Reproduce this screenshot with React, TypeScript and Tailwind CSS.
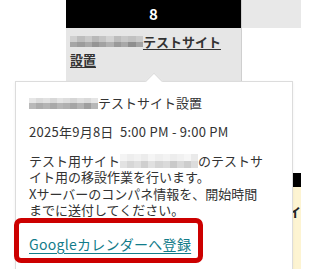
const cellMosaic = [
  'bg-[#cfcfcf]', 'bg-[#bdbdbd]', 'bg-[#c9c9c9]', 'bg-[#b8b8b8]', 'bg-[#c4c4c4]', 'bg-[#d2d2d2]', 'bg-[#bcbcbc]', 'bg-[#c8c8c8]', 'bg-[#c1c1c1]', 'bg-[#cacaca]',
  'bg-[#a6a6a6]', 'bg-[#9c9c9c]', 'bg-[#a9a9a9]', 'bg-[#959595]', 'bg-[#a2a2a2]', 'bg-[#b1b1b1]', 'bg-[#9a9a9a]', 'bg-[#a8a8a8]', 'bg-[#8f8f8f]', 'bg-[#a4a4a4]',
];

const titleMosaic = [
  'bg-[#e6e6e6]', 'bg-[#dcdcdc]', 'bg-[#e2e2e2]', 'bg-[#d8d8d8]', 'bg-[#e4e4e4]', 'bg-[#dedede]', 'bg-[#d6d6d6]', 'bg-[#e0e0e0]', 'bg-[#dadada]', 'bg-[#e5e5e5]',
  'bg-[#b9b9b9]', 'bg-[#acacac]', 'bg-[#b4b4b4]', 'bg-[#a9a9a9]', 'bg-[#b6b6b6]', 'bg-[#b0b0b0]', 'bg-[#a5a5a5]', 'bg-[#b3b3b3]', 'bg-[#9f9f9f]', 'bg-[#b7b7b7]',
];

const descMosaic = [
  'bg-[#f4f4f4]', 'bg-[#eeeeee]', 'bg-[#f2f2f2]', 'bg-[#ececec]', 'bg-[#f5f5f5]', 'bg-[#efefef]', 'bg-[#f3f3f3]', 'bg-[#ededed]', 'bg-[#f1f1f1]', 'bg-[#f6f6f6]', 'bg-[#eaeaea]',
  'bg-[#e2e2e2]', 'bg-[#d6d6d6]', 'bg-[#dedede]', 'bg-[#cfcfcf]', 'bg-[#e0e0e0]', 'bg-[#d4d4d4]', 'bg-[#dadada]', 'bg-[#c9c9c9]', 'bg-[#d8d8d8]', 'bg-[#cdcdcd]', 'bg-[#dcdcdc]',
];

// pixelated blur used to hide names in the screenshot
function Mosaic({ cells, cols, className }: { cells: string[]; cols: string; className: string }) {
  return (
    <span className={`inline-grid align-middle ${cols} ${className}`}>
      {cells.map((c, i) => (
        <span key={i} className={`block ${c}`} />
      ))}
    </span>
  );
}

export default function App() {
  return (
    <div className="relative w-[301px] h-[269px] overflow-hidden bg-white text-[#333] font-['Noto_Sans_CJK_JP','Noto_Sans',sans-serif]">
      {/* calendar row */}
      <div className="flex h-[173px]">
        <div className="w-[66px]" />
        <div className="w-[176px] flex flex-col bg-[#e6e6e6] border-r border-[#cfcfcf]">
          <div className="h-[28px] bg-black text-white flex items-center justify-center text-[15px] font-bold">8</div>
          <div className="px-1 pt-[5px] text-[13px] leading-[18px] font-bold">
            <Mosaic cells={cellMosaic} cols="grid-cols-[repeat(10,7.3px)]" className="h-[11px] grid-rows-2 -mt-[3px]" />
            <span className="underline underline-offset-2">テストサイト</span>
            <br />
            <span className="underline underline-offset-2">設置</span>
          </div>
        </div>
        <div className="flex-1">
          <div className="h-[28px] bg-[#e8e8e8]" />
        </div>
      </div>

      {/* next week row, mostly hidden */}
      <div className="flex h-[96px]">
        <div className="w-[293px]" />
        <div className="flex-1 flex flex-col">
          <div className="h-[14px] bg-black" />
          <div className="flex-1 bg-[#fdf4d2] pt-[17px] text-[13px] leading-[16px] font-bold text-[#222] whitespace-nowrap">
            サイ
            <br />
            ト
          </div>
        </div>
      </div>

      {/* popup */}
      <div className="absolute left-[15px] top-[81px] w-[278px] h-[200px] bg-white border border-[#dcdcdc] shadow-[0_1px_3px_rgba(0,0,0,0.06)] px-[13px] pt-[11px]">
        <span className="absolute left-[132px] -top-[7px] w-[12px] h-[12px] bg-white border-l border-t border-[#dcdcdc] rotate-45" />
        <div className="text-[13px] leading-[20px] whitespace-nowrap">
          <Mosaic cells={titleMosaic} cols="grid-cols-[repeat(10,6.9px)]" className="h-[11px] grid-rows-2 -mt-[2px]" />
          テストサイト設置
        </div>
        <div className="mt-[9px] text-[13px] leading-[20px] whitespace-pre tracking-[0.02em]">2025年9月8日  5:00 PM - 9:00 PM</div>
        <div className="mt-[11px] text-[13px] leading-[16.4px] whitespace-nowrap">
          テスト用サイト
          <Mosaic cells={descMosaic} cols="grid-cols-[repeat(11,7.1px)]" className="h-[14px] grid-rows-2 -mt-[2px]" />
          のテストサ
          <br />
          イト用の移設作業を行います。
          <br />
          Xサーバーのコンパネ情報を、開始時間
          <br />
          までに送付してください。
        </div>
        <div className="mt-[15px] text-[14px] leading-[20px]">
          <a href="#" className="text-[#127c8a] underline underline-offset-[3px] tracking-[0.02em]">Googleカレンダーへ登録</a>
        </div>
      </div>

      {/* annotation box */}
      <div className="absolute left-[14px] top-[218px] w-[189px] h-[45px] border-[5px] border-[#cc0000] rounded-[7px]" />
    </div>
  );
}
